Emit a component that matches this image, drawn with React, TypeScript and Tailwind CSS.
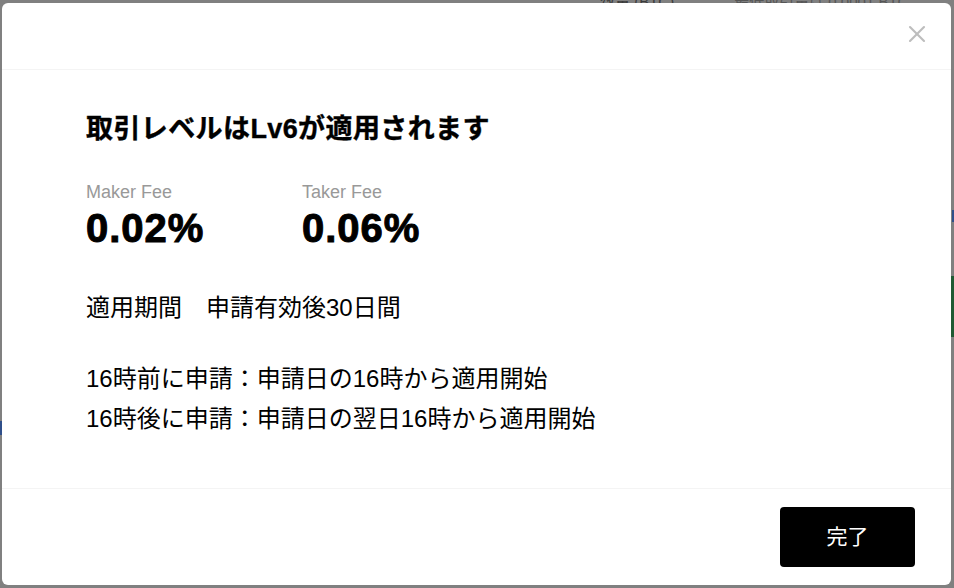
import { X } from "lucide-react";

const font = { fontFamily: '"Liberation Sans", "Noto Sans CJK JP", sans-serif' };

// faint page that sits behind the dimmed overlay
function Backdrop() {
  return (
    <div className="absolute inset-0 flex flex-col">
      <div className="-mt-[9px] flex gap-[60px] pl-[600px] text-[15px] text-[#3a3a3a]">
        <span>数量 (BTC)</span>
        <span className="text-[#555]">最低取引量は 0.0001 BTC</span>
      </div>
      <div className="mt-[196px] flex justify-end">
        <div className="h-[12px] w-[2px] bg-[#2f4f8a]" />
      </div>
      <div className="mt-[54px] flex justify-end">
        <div className="h-[61px] w-[3px] bg-[#1f5a33]" />
      </div>
      <div className="mt-[84px] h-[14px] w-[2px] bg-[#2f4f8a]" />
    </div>
  );
}

function Fee({ label, value }: { label: string; value: string }) {
  return (
    <div className="w-[216px]">
      <div className="text-[18px] leading-[20px] text-[#999]">{label}</div>
      <div className="mt-[4px] text-[40px] font-black leading-[44px] tracking-[1px] [-webkit-text-stroke:1px_black]">
        {value}
      </div>
    </div>
  );
}

export default function App() {
  return (
    <div className="relative h-[588px] w-[954px] overflow-hidden bg-[#808080] pl-[2px] pt-[3px]" style={font}>
      <Backdrop />
      <div className="relative flex h-[582px] w-[949px] flex-col rounded-[6px] bg-white">
        <div className="flex h-[67px] items-start justify-end border-b border-[#f4f4f4] pr-[20px] pt-[17px]">
          <button className="flex h-[28px] w-[28px] items-center justify-center text-[#bdbdbd]">
            <X size={28} strokeWidth={1.8} />
          </button>
        </div>

        <div className="flex-1 pl-[84px] pt-[41px] text-black">
          <h1 className="text-[27px] font-bold leading-[36px] tracking-[0.4px] [-webkit-text-stroke:0.4px_black]">
            取引レベルはLv6が適用されます
          </h1>

          <div className="mt-[35px] flex">
            <Fee label="Maker Fee" value="0.02%" />
            <Fee label="Taker Fee" value="0.06%" />
          </div>

          <p className="mt-[42px] text-[24px] leading-[32px]">適用期間　申請有効後30日間</p>

          <div className="mt-[35px] text-[24px] leading-[40px]">
            <p>16時前に申請：申請日の16時から適用開始</p>
            <p>16時後に申請：申請日の翌日16時から適用開始</p>
          </div>
        </div>

        <div className="flex h-[97px] items-center justify-end border-t border-[#f4f4f4] pr-[36px]">
          <button className="h-[60px] w-[135px] rounded-[4px] bg-black text-[21px] text-white">完了</button>
        </div>
      </div>
    </div>
  );
}
